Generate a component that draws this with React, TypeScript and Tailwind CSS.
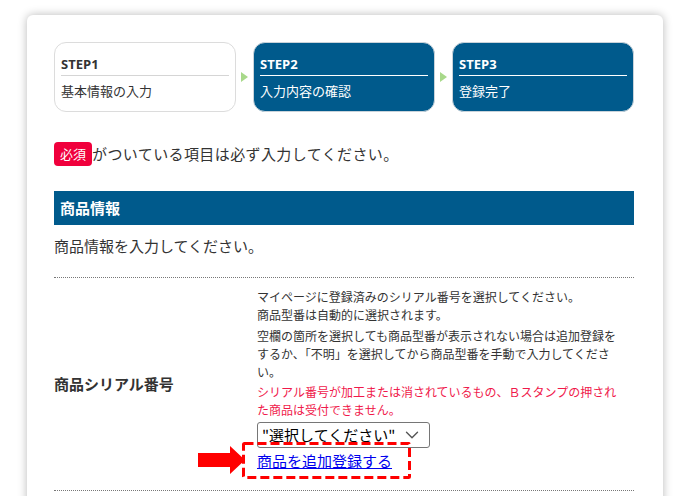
import { ChevronDown } from 'lucide-react'

const font = { fontFamily: '"Noto Sans CJK JP", "Noto Sans", sans-serif' }

type Step = { label: string; text: string; active: boolean }

const steps: Step[] = [
  { label: 'STEP1', text: '基本情報の入力', active: false },
  { label: 'STEP2', text: '入力内容の確認', active: true },
  { label: 'STEP3', text: '登録完了', active: true },
]

function StepBox({ step }: { step: Step }) {
  return (
    <div
      className={
        step.active
          ? 'flex-1 h-[70px] rounded-[12px] border border-[#c9d3da] bg-[#005a8c] text-white px-[6px] pt-[13px]'
          : 'flex-1 h-[70px] rounded-[12px] border border-[#dcdcdc] bg-white text-[#333] px-[6px] pt-[13px]'
      }
    >
      <div
        className={
          step.active
            ? 'text-[13px] font-bold leading-[16px] pb-[3px] border-b border-white'
            : 'text-[13px] font-bold leading-[16px] pb-[3px] border-b border-[#d5d5d5]'
        }
        style={{ fontFamily: '"Open Sans", "Noto Sans CJK JP", sans-serif' }}
      >
        {step.label}
      </div>
      <div className="text-[13px] leading-[18px] mt-[6px]">{step.text}</div>
    </div>
  )
}

function Arrow() {
  return (
    <div className="w-[17px] flex items-center justify-center">
      <svg width="7" height="10" viewBox="0 0 7 10">
        <path d="M0 0 L7 5 L0 10 Z" fill="#a8d98a" />
      </svg>
    </div>
  )
}

export default function App() {
  return (
    <div className="w-[680px] h-[496px] overflow-hidden bg-white pt-[15px] pl-[27px]" style={font}>
      <div className="w-[636px] h-[520px] bg-white rounded-[6px] shadow-[0_0_10px_rgba(0,0,0,0.28)] pl-[27px] pr-[29px] pt-[27px]">
        {/* steps */}
        <div className="flex">
          <StepBox step={steps[0]} />
          <Arrow />
          <StepBox step={steps[1]} />
          <Arrow />
          <StepBox step={steps[2]} />
        </div>

        {/* required note */}
        <div className="flex items-center mt-[30px] text-[15px] tracking-[0.4px] text-[#333]">
          <span className="inline-flex items-center justify-center w-[38px] h-[24px] rounded-[4px] bg-[#f0003c] text-white text-[13px] tracking-normal">
            必須
          </span>
          <span>がついている項目は必ず入力してください。</span>
        </div>

        {/* section header */}
        <div className="mt-[25px] h-[34px] bg-[#005a8c] flex items-center pl-[6px] text-white text-[15px] font-bold">
          商品情報
        </div>

        <div className="mt-[10px] text-[15px] text-[#333] leading-[22px]">
          商品情報を入力してください。
        </div>

        <div className="mt-[20px] border-t border-dotted border-[#777]" />

        {/* serial row */}
        <div className="flex border-b border-dotted border-[#777]">
          <div className="w-[203px] flex items-center text-[15px] font-bold text-[#333]">
            商品シリアル番号
          </div>
          <div className="w-[364px] pt-[10px] pb-[19px] text-[12px] leading-[18px] text-[#333] relative">
            <p>
              マイページに登録済みのシリアル番号を選択してください。
              <br />
              商品型番は自動的に選択されます。
            </p>
            <p className="mt-[3px]">
              空欄の箇所を選択しても商品型番が表示されない場合は追加登録をするか、「不明」を選択してから商品型番を手動で入力してください。
            </p>
            <p className="mt-[2px] text-[#f0194b]">
              シリアル番号が加工または消されているもの、Ｂスタンプの押された商品は受付できません。
            </p>
            <div className="mt-[3px] w-[173px] h-[26px] rounded-[3px] border border-[#767676] bg-white flex items-center justify-between pl-[4px] pr-[6px] text-[15px] text-black">
              <span>"選択してください"</span>
              <ChevronDown size={22} strokeWidth={1.5} color="#555" />
            </div>
            <a href="#" className="block mt-[3px] text-[15px] leading-[20px] text-[#0000ee] underline w-fit">
              商品を追加登録する
            </a>

            {/* highlight box and arrow */}
            <svg
              className="absolute left-[-15px] top-[164px]"
              width="169"
              height="37"
              viewBox="0 0 169 37"
            >
              <rect
                x="1.5"
                y="1.5"
                width="166"
                height="34"
                rx="1"
                fill="none"
                stroke="#f00"
                strokeWidth="3"
                strokeDasharray="9 4"
              />
            </svg>
            <svg
              className="absolute left-[-59px] top-[168px]"
              width="47"
              height="28"
              viewBox="0 0 47 28"
            >
              <path d="M0 7 L32 7 L32 0 L47 14 L32 28 L32 21 L0 21 Z" fill="#f00" />
            </svg>
          </div>
        </div>
      </div>
    </div>
  )
}
